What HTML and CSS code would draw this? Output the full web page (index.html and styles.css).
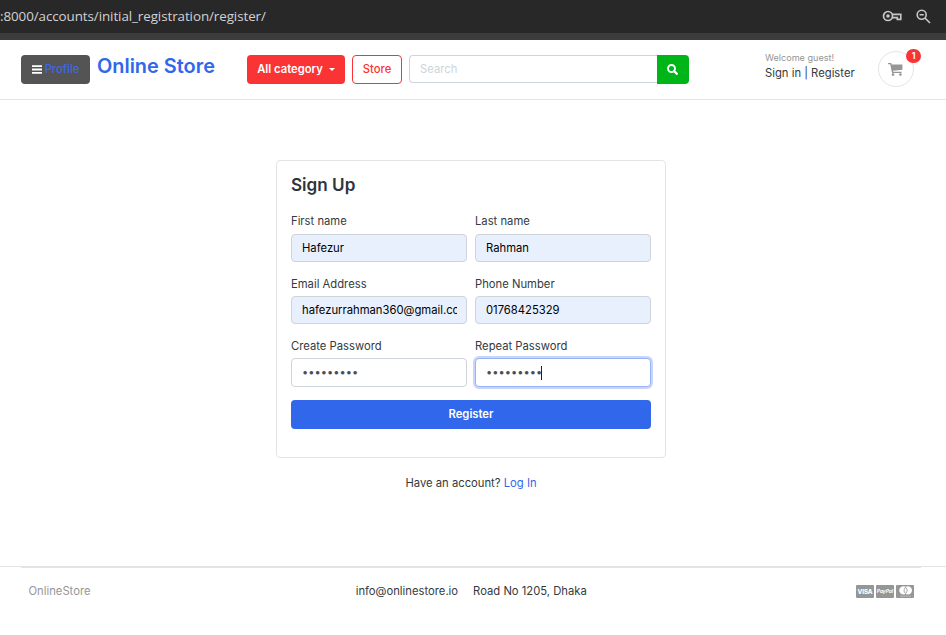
FILE: index.html
```html
<!DOCTYPE html>
<html lang="en">
<head>
<meta charset="utf-8">
<title>Online Store - Sign Up</title>
<link rel="stylesheet" href="styles.css">
</head>
<body>
<div class="browser-bar">
  <span class="url">:8000/accounts/initial_registration/register/</span>
  <svg class="key-icon" width="20" height="14" viewBox="0 0 20 14" fill="none" stroke="#c7c7c7"><circle cx="6" cy="7" r="4.5" stroke-width="1.7"/><circle cx="6" cy="7" r="1.8" fill="#c7c7c7" stroke="none"/><path d="M10 5.4h8.8v5h-3.5V8.6H10" stroke-width="1.6"/></svg>
  <svg class="zoom-icon" width="15" height="15" viewBox="0 0 15 15" fill="none" stroke="#c7c7c7" stroke-width="1.6"><circle cx="5.7" cy="5.7" r="4.5"/><path d="M9 9l5 5M3.6 5.7h4.2"/></svg>
</div>
<header class="header">
  <button class="btn profile"><svg width="10" height="9" viewBox="0 0 10 9"><path d="M0 1.2h10M0 4.5h10M0 7.8h10" stroke="#fff" stroke-width="1.8"/></svg><span>Profile</span></button>
  <a class="brand">Online Store</a>
  <button class="btn category">All category<i class="caret"></i></button>
  <button class="btn store">Store</button>
  <form class="search">
    <input class="search-input" placeholder="Search">
    <button class="btn search-btn" type="button"><svg width="11" height="11" viewBox="0 0 11 11" fill="none" stroke="#fff" stroke-width="1.9"><circle cx="4.5" cy="4.5" r="3.5"/><path d="M7 7l2.8 2.8" stroke-width="2.3" stroke-linecap="round"/></svg></button>
  </form>
  <div class="guest"><small>Welcome guest!</small><div><a>Sign in</a> | <a>Register</a></div></div>
  <a class="cart"><svg width="15" height="13" viewBox="0 0 15 13" fill="#969696"><path d="M0 0h3.3l.3 1.4H14.4v5.3L5 7.8l.2 1h8.3V10H4L2.2 1.3H0z"/><circle cx="5" cy="11.6" r="1.3"/><circle cx="12.4" cy="11.6" r="1.3"/></svg><span class="badge">1</span></a>
</header>
<main class="main">
  <section class="card">
    <h1>Sign Up</h1>
    <form class="fields">
      <label>First name<input class="filled" value="Hafezur"></label>
      <label>Last name<input class="filled" value="Rahman"></label>
      <label class="lower">Email Address<input class="filled" value="hafezurrahman360@gmail.com"></label>
      <label class="lower">Phone Number<input class="filled" value="01768425329"></label>
      <label class="lower">Create Password<span class="password">•••••••••</span></label>
      <label class="lower">Repeat Password<span class="password focused">•••••••••<i class="cursor"></i></span></label>
    </form>
    <button class="btn register">Register</button>
  </section>
  <p class="login">Have an account? <a>Log In</a></p>
</main>
<footer class="footer">
  <div class="footer-row">
    <span class="muted">OnlineStore</span>
    <span class="contact"><span>info@onlinestore.io</span><span>Road No 1205, Dhaka</span></span>
    <span class="payments">
      <span class="pay visa">VISA</span>
      <span class="pay paypal">PayPal</span>
      <span class="pay"><svg width="17" height="13" viewBox="0 0 17 13"><circle cx="6.5" cy="5.4" r="4.2" fill="#fff"/><circle cx="10.8" cy="5.4" r="4.2" fill="#fff"/><path d="M8.6 2.2c-2 2-2 4.4 0 6.4 2-2 2-4.4 0-6.4z" fill="#fff" stroke="#969696" stroke-width=".9"/><path d="M3 11.2h11" stroke="#ccc" stroke-width=".7"/></svg></span>
    </span>
  </div>
</footer>
</body>
</html>
```
FILE: styles.css
```css
* { box-sizing: border-box; }
body { margin: 0; height: 635px; overflow: hidden; background: #fff; color: #343a40; font: 11.25px/17px Inter, "Liberation Sans", sans-serif; }
input, button { font: inherit; margin: 0; }
.browser-bar { display: flex; align-items: center; height: 40px; padding: 0 15px 0 0; background: #282828; border-bottom: 7px solid #3c3c3c; }
.url { flex: 1; margin-top: -2px; color: #d2d2d2; font: 13.4px/18px "Open Sans", "Noto Sans", sans-serif; letter-spacing: -.08px; }
.key-icon { margin: 0 14px 1px 0; }
.zoom-icon { margin-bottom: 1px; }
.header { display: flex; align-items: flex-start; height: 60px; padding: 15px 32px 0 21px; border-bottom: 1px solid #e4e4e4; }
.btn { display: flex; align-items: center; justify-content: center; flex: none; height: 29px; padding: 0; border: 1px solid transparent; border-radius: 4px; color: #fff; font-weight: 600; }
.profile { width: 69px; gap: 3px; background: #545454; color: #4169e1; font-weight: 500; }
.brand { width: 150px; padding-left: 7px; color: #3167eb; font-size: 19.9px; font-weight: 600; line-height: 22px; white-space: nowrap; }
.category { width: 98px; margin-left: 7px; background: #fa3434; }
.caret { margin-left: 6px; border: 3px solid transparent; border-top-color: #fff; border-bottom: 0; }
.store { width: 50px; margin-left: 7px; border-color: #fa3434; background: #fff; color: #fa3434; font-weight: 500; }
.search { display: flex; width: 280px; margin-left: 7px; }
.search-input { width: 248px; height: 28px; padding: 0 10px; border: 1px solid #ced4da; border-right: 0; border-radius: 4px 0 0 4px; outline: 0; }
.search-input::placeholder { color: #ced4da; opacity: 1; }
.search-btn { width: 32px; padding-right: 1px; border-radius: 0 4px 4px 0; background: #00b517; }
.guest { width: 113px; margin: -4px 0 0 76px; white-space: nowrap; }
.guest small { display: block; color: #969696; font-size: 9.1px; line-height: 14px; }
.cart { position: relative; display: flex; align-items: center; justify-content: center; width: 36px; height: 36px; margin-top: -4px; padding: 1px 1px 0 0; border: 1px solid #e4e4e4; border-radius: 50%; }
.badge { position: absolute; top: -3px; right: -8px; width: 15px; height: 14px; border-radius: 7px; background: #fa3434; color: #fff; font-size: 8.6px; font-weight: 700; line-height: 14px; text-align: center; }
.main { display: flex; flex-direction: column; align-items: center; height: 466px; padding: 60px 4px 0 0; }
.card { width: 390px; height: 298px; padding: 14px; border: 1px solid #e4e4e4; border-radius: 4px; }
h1 { margin: 0 0 19px; color: #2d353c; font-size: 17.1px; font-weight: 600; line-height: 19px; }
.fields { display: grid; grid-template-columns: 176px 176px; grid-template-rows: 49px 50px 50px; column-gap: 8px; row-gap: 12.5px; height: 174px; }
.fields label { display: block; height: 50px; }
.fields .lower { padding-top: 1px; }
.fields input, .password { display: block; width: 100%; height: 28px; margin-top: 4px; padding: 0 9px 0 10px; border: 1px solid #ced4da; border-radius: 4px; background: #fff; outline: 0; }
.fields .lower > * { margin-top: 3px; }
.fields .filled { background: #e8f0fe; color: #000; }
.password { height: 29px; color: #495057; font: 11.1px/26px Inter, sans-serif; white-space: nowrap; }
.focused { border-color: #98b3f5; box-shadow: 0 0 0 2px #c8d6fb; }
.cursor { display: inline-block; width: 1px; height: 14px; margin-left: -1px; background: #222; vertical-align: middle; }
.register { width: 100%; margin-top: 13px; background: #3167eb; }
.login { margin: 17px 0 0; }
.login a { color: #3167eb; }
.footer { border-top: 1px solid #e4e4e4; }
.footer-row { display: grid; grid-template-columns: 1fr auto 1fr; align-items: center; height: 48px; margin: 0 25px 0 21px; padding: 0 7px 0 7.5px; border-top: 1px solid #e4e4e4; }
.muted { color: #969696; }
.contact { display: flex; gap: 15px; }
.payments { display: flex; justify-content: flex-end; gap: 2px; }
.pay { display: flex; align-items: center; justify-content: center; width: 18px; height: 13px; border-radius: 1px; background: #969696; color: #fff; }
.visa { font-size: 6.2px; font-weight: 800; }
.paypal { font-size: 4.8px; font-style: italic; font-weight: 700; }
```
